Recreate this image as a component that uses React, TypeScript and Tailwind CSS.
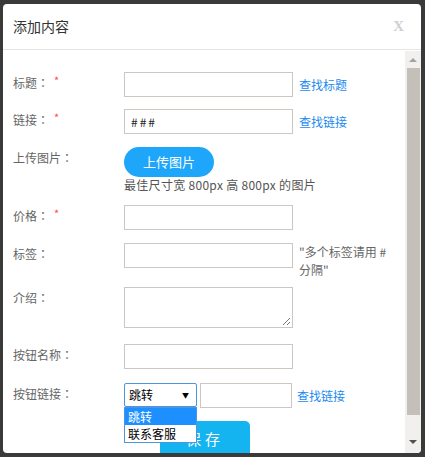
import React from "react";

const font = { fontFamily: '"Noto Sans CJK SC", "Noto Sans", sans-serif' };
const jp = { fontFamily: '"Noto Sans CJK JP", sans-serif' };

function Label({ text, req }: { text: string; req?: boolean }) {
  return (
    <div className="w-[111px] shrink-0 pt-[1px] text-[12px] leading-[20px] text-[#666]">
      {text}
      <span style={jp}>：</span>
      {req && <span className="ml-[5px] text-[11px] relative top-[-3px] text-[#ff4a4a]">*</span>}
    </div>
  );
}

function Input({ value, w = "w-[169px]" }: { value?: string; w?: string }) {
  return (
    <div className={`${w} h-[25px] border border-[#ccc8c1] bg-white flex items-center pl-[6px] text-[12px] text-[#222] tracking-[2px]`}>
      {value}
    </div>
  );
}

function Link({ text, ml = "ml-[6px]" }: { text: string; ml?: string }) {
  return <span className={`${ml} text-[12px] text-[#1a8af0] leading-[25px]`}>{text}</span>;
}

export default function App() {
  return (
    <div className="w-[425px] h-[457px] bg-[#3a3a3a] pt-[4px] pl-[3px] overflow-hidden" style={font}>
      <div className="w-[418px] h-[449px] bg-white rounded-[4px] flex flex-col overflow-hidden">
        <div className="h-[46px] shrink-0 border-b border-[#e5e5e5] flex items-center justify-between pl-[10px] pr-[17px]">
          <span className="text-[14px] text-[#333]">添加内容</span>
          <span className="text-[15px] font-bold text-[#cfcfcf]" style={{ fontFamily: '"Liberation Serif", serif' }}>X</span>
        </div>
        <div className="flex flex-1 min-h-0">
          <div className="flex-1 pl-[10px] pt-[22px] relative">
            <div className="flex">
              <Label text="标题" req />
              <Input />
              <Link text="查找标题" />
            </div>
            <div className="flex mt-[12px]">
              <Label text="链接" req />
              <Input value="###" />
              <Link text="查找链接" />
            </div>
            <div className="flex mt-[13px]">
              <Label text="上传图片" />
              <div className="flex flex-col">
                <div className="w-[90px] h-[30px] rounded-full bg-[#1ea6fb] text-white text-[13px] flex items-center justify-center">
                  上传图片
                </div>
                <div className="text-[12px] leading-[16px] text-[#555] mt-[0px] tracking-[0.3px]">最佳尺寸宽 800px 高 800px 的图片</div>
              </div>
            </div>
            <div className="flex mt-[12px]">
              <Label text="价格" req />
              <Input />
            </div>
            <div className="flex mt-[13px]">
              <Label text="标签" />
              <Input />
              <div className="ml-[6px] w-[96px] text-[12px] leading-[18px] text-[#666]">"多个标签请用 # 分隔"</div>
            </div>
            <div className="flex mt-[8px]">
              <Label text="介绍" />
              <div className="w-[169px] h-[41px] border border-[#ccc8c1] relative">
                <svg className="absolute right-[1px] bottom-[1px]" width="9" height="9" viewBox="0 0 9 9">
                  <line x1="8" y1="1" x2="1" y2="8" stroke="#777" strokeWidth="1" />
                  <line x1="8" y1="5" x2="5" y2="8" stroke="#777" strokeWidth="1" />
                </svg>
              </div>
            </div>
            <div className="flex mt-[16px]">
              <Label text="按钮名称" />
              <Input />
            </div>
            <div className="flex mt-[14px] relative">
              <Label text="按钮链接" />
              <div className="relative">
                <div className="w-[73px] h-[24px] border border-[#4f94de] rounded-[2px] flex items-center justify-between pl-[4px] pr-[7px] text-[12px] text-black">
                  <span>跳转</span>
                  <span className="text-[7px]">▼</span>
                </div>
                <div className="absolute left-0 top-[24px] w-[73px] border border-[#4f94de] bg-white z-10 text-[12px]">
                  <div className="h-[17px] leading-[17px] pl-[3px] bg-[#1e8fff] text-white">跳转</div>
                  <div className="h-[17px] leading-[17px] pl-[3px] text-black">联系客服</div>
                </div>
              </div>
              <div className="ml-[3px]">
                <Input w="w-[92px]" />
              </div>
              <Link text="查找链接" ml="ml-[5px]" />
            </div>
            <div className="mt-[13px] ml-[147px] w-[90px] h-[36px] rounded-[5px] bg-[#13b4f0] text-white text-[15px] tracking-[4px] flex items-center justify-center">
              保存
            </div>
          </div>
          <div className="w-[16px] shrink-0 bg-[#f1f0ee] flex flex-col items-center mt-[1px]">
            <div className="h-[17px] flex items-center justify-center">
              <div className="w-0 h-0 border-l-[4px] border-r-[4px] border-b-[4px] border-l-transparent border-r-transparent border-b-[#a3a3a3]" />
            </div>
            <div className="w-[13px] h-[347px] bg-[#c4c0b9]" />
            <div className="flex-1 flex items-end pb-[9px]">
              <div className="w-0 h-0 border-l-[4px] border-r-[4px] border-t-[4px] border-l-transparent border-r-transparent border-t-[#505050]" />
            </div>
          </div>
        </div>
      </div>
    </div>
  );
}
